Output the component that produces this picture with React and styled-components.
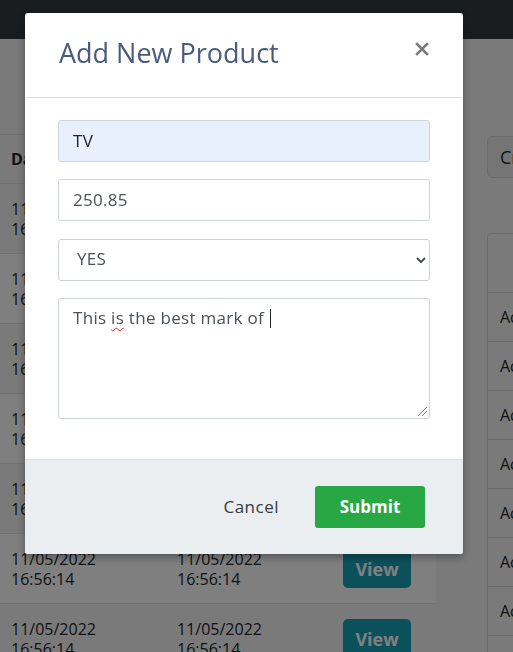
import React from "react";
import styled, { createGlobalStyle } from "styled-components";

const GlobalStyle = createGlobalStyle`
  html, body {
    margin: 0;
    padding: 0;
    height: 100%;
    overflow: hidden;
  }
  body {
    font-family: "Open Sans", "Noto Sans", sans-serif;
    background: #f5f5f5;
    color: #212529;
  }
`;

const rows = Array.from({ length: 7 }, () => ({
  created: ["11/05/2022", "16:56:14"],
  updated: ["11/05/2022", "16:56:14"],
}));

export default function App() {
  return (
    <>
      <GlobalStyle />
      <Navbar />
      <Main>
        <Table>
          <HeadRow>
            <HeadCell>Date Created</HeadCell>
            <HeadCell>Date Updated</HeadCell>
            <HeadCell>Action</HeadCell>
          </HeadRow>
          {rows.map((r, i) => (
            <Row key={i} $striped={i % 2 === 0}>
              <Cell>
                {r.created[0]}
                <br />
                {r.created[1]}
              </Cell>
              <Cell>
                {r.updated[0]}
                <br />
                {r.updated[1]}
              </Cell>
              <Cell>
                <ViewButton>View</ViewButton>
              </Cell>
            </Row>
          ))}
        </Table>
        <Side>
          <CreateButton>Create</CreateButton>
          <Card>
            <CardHead />
            {Array.from({ length: 8 }, (_, i) => (
              <CardRow key={i}>Admin</CardRow>
            ))}
          </Card>
        </Side>
      </Main>

      <Backdrop />
      <Modal>
        <ModalHeader>
          <Title>Add New Product</Title>
          <Close aria-label="Close">
            <svg width="14" height="14" viewBox="0 0 14 14">
              <path
                d="M2 2 L12 12 M12 2 L2 12"
                stroke="#7b7b7b"
                strokeWidth="2.6"
                strokeLinecap="square"
              />
            </svg>
          </Close>
        </ModalHeader>
        <ModalBody>
          <Input $autofill defaultValue="TV" />
          <Input defaultValue="250.85" />
          <Select defaultValue="YES">
            <option>YES</option>
            <option>NO</option>
          </Select>
          <TextBox>
            This <Misspelled>is</Misspelled> the best mark of <Caret />
            <Grip />
          </TextBox>
        </ModalBody>
        <ModalFooter>
          <Cancel>Cancel</Cancel>
          <Submit>Submit</Submit>
        </ModalFooter>
      </Modal>
    </>
  );
}

const Navbar = styled.div`
  height: 39px;
  background: #343a40;
`;

const Main = styled.div`
  display: grid;
  grid-template-columns: 436px 1fr;
  column-gap: 51px;
  padding-top: 95px;
`;

const Table = styled.div`
  display: flex;
  flex-direction: column;
`;

const HeadRow = styled.div`
  display: grid;
  grid-template-columns: 166px 166px 1fr;
  height: 50px;
  align-items: center;
  border-top: 1px solid #dee2e6;
  border-bottom: 1px solid #dee2e6;
  box-sizing: border-box;
`;

const HeadCell = styled.div`
  padding-left: 11px;
  font-weight: 700;
  font-size: 16px;
  white-space: nowrap;
`;

const Row = styled.div`
  display: grid;
  grid-template-columns: 166px 166px 1fr;
  height: 70px;
  box-sizing: border-box;
  align-items: center;
  border-bottom: 1px solid #dee2e6;
  background: ${(p) => (p.$striped ? "transparent" : "#ffffff")};
`;

const Cell = styled.div`
  padding-left: 11px;
  font-size: 16px;
  line-height: 20px;
`;

const ViewButton = styled.button`
  width: 68px;
  height: 39px;
  border: none;
  border-radius: 5px;
  background: #17a2b8;
  color: #fff;
  font-family: inherit;
  font-weight: 700;
  font-size: 18px;
`;

const Side = styled.div`
  display: flex;
  flex-direction: column;
  align-items: flex-start;
`;

const CreateButton = styled.button`
  margin-top: 2px;
  height: 42px;
  width: 110px;
  padding: 0 12px;
  text-align: left;
  border: 1px solid #d6d6d6;
  border-radius: 5px;
  background: #ebebeb;
  color: #212529;
  font-family: inherit;
  font-size: 18px;
`;

const Card = styled.div`
  margin-top: 55px;
  width: 100px;
  border: 1px solid #d4d4d4;
  border-radius: 4px;
`;

const CardHead = styled.div`
  height: 58px;
`;

const CardRow = styled.div`
  height: 49px;
  display: flex;
  align-items: center;
  padding-left: 12px;
  border-top: 1px solid #d4d4d4;
  box-sizing: border-box;
  font-size: 16px;
`;

const Backdrop = styled.div`
  position: fixed;
  inset: 0;
  background: rgba(0, 0, 0, 0.5);
`;

const Modal = styled.div`
  position: fixed;
  top: 13px;
  left: 25px;
  width: 438px;
  background: #fff;
  border-radius: 3px;
  overflow: hidden;
  box-shadow: 0 3px 8px rgba(0, 0, 0, 0.35);
  display: flex;
  flex-direction: column;
`;

const ModalHeader = styled.div`
  height: 85px;
  box-sizing: border-box;
  display: flex;
  justify-content: space-between;
  align-items: flex-start;
  padding: 23px 34px 0 34px;
  border-bottom: 1px solid #dee2e6;
`;

const Title = styled.h5`
  margin: 0;
  font-size: 27px;
  font-weight: 400;
  line-height: 34px;
  color: #4b5b7c;
`;

const Close = styled.button`
  margin-top: 6px;
  padding: 0;
  border: none;
  background: none;
  width: 14px;
  height: 14px;
  display: flex;
`;

const ModalBody = styled.div`
  display: flex;
  flex-direction: column;
  gap: 17.33px;
  padding: 22px 33px 40px;
`;

const fieldBase = `
  box-sizing: border-box;
  width: 100%;
  border: 1px solid #ced4da;
  border-radius: 3px;
  font-family: "Open Sans", "Noto Sans", sans-serif;
  font-size: 17px;
  letter-spacing: 0.3px;
  color: #495057;
  outline: none;
`;

const Input = styled.input`
  ${fieldBase}
  height: 42px;
  padding: 0 14px 2px;
  background: ${(p) => (p.$autofill ? "#e8f0fe" : "#fff")};
  color: ${(p) => (p.$autofill ? "#222" : "#495057")};
`;

const Select = styled.select`
  ${fieldBase}
  height: 42px;
  padding: 0 10px 2px 14px;
  background: #fff;
`;

const TextBox = styled.div`
  ${fieldBase}
  position: relative;
  height: 121px;
  padding: 7px 14px;
  line-height: 23px;
`;

const Misspelled = styled.span`
  text-decoration: underline wavy #e0262b;
  text-decoration-thickness: 1px;
  text-underline-offset: 3px;
`;

const Caret = styled.span`
  display: inline-block;
  width: 1px;
  height: 19px;
  background: #222;
  vertical-align: -4px;
  margin-left: 1px;
`;

const Grip = styled.span`
  position: absolute;
  right: 2px;
  bottom: 2px;
  width: 9px;
  height: 9px;
  background: linear-gradient(
    135deg,
    transparent 0 45%,
    #777 45% 52%,
    transparent 52% 70%,
    #777 70% 77%,
    transparent 77%
  );
`;

const ModalFooter = styled.div`
  height: 95px;
  box-sizing: border-box;
  display: flex;
  align-items: center;
  justify-content: flex-end;
  padding-right: 38px;
  border-top: 1px solid #dee2e6;
  background: #ebeef0;
`;

const Cancel = styled.button`
  border: none;
  background: none;
  padding: 0;
  margin-right: 36px;
  font-family: inherit;
  font-size: 17px;
  letter-spacing: 0.5px;
  color: #343a40;
`;

const Submit = styled.button`
  width: 110px;
  height: 42px;
  border: none;
  border-radius: 3px;
  background: #28a745;
  color: #fff;
  font-family: inherit;
  font-size: 17px;
  font-weight: 700;
`;
